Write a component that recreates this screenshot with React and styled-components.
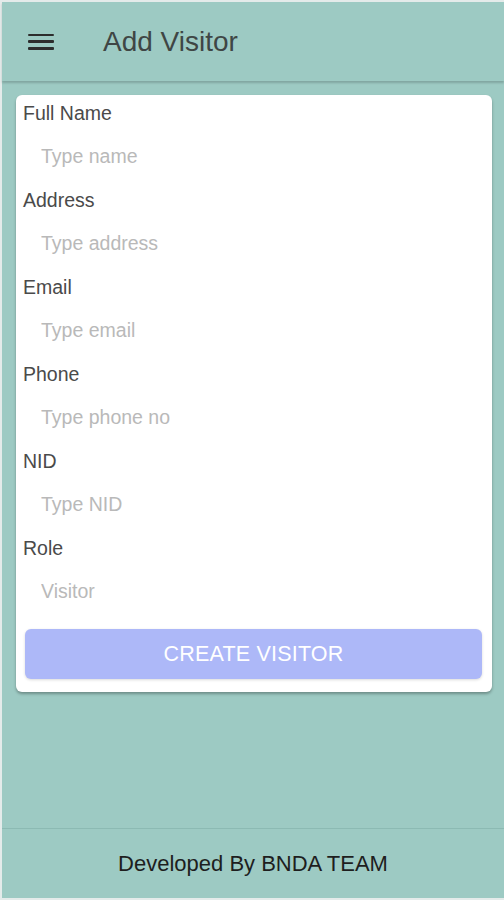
import React from "react";
import styled, { createGlobalStyle } from "styled-components";

const Global = createGlobalStyle`
  html, body { margin: 0; padding: 0; background: #e4ebea; }
  * { box-sizing: border-box; }
  body { font-family: "Liberation Sans", Arial, sans-serif; }
`;

const Page = styled.div`
  width: 504px;
  height: 900px;
  margin: 0;
  padding: 2px 0 2px 2px;
  display: flex;
  flex-direction: column;
`;

const Screen = styled.div`
  flex: 1;
  background: #9dcac3;
  display: flex;
  flex-direction: column;
`;

const Header = styled.header`
  height: 79px;
  display: flex;
  align-items: center;
  padding-left: 26px;
  gap: 49px;
  box-shadow: 0 2px 2px rgba(0, 0, 0, 0.18);
  position: relative;
  z-index: 1;
`;

const Burger = styled.button`
  width: 26px;
  height: 16px;
  padding: 0;
  border: none;
  background: none;
  display: flex;
  flex-direction: column;
  justify-content: space-between;
  span {
    display: block;
    height: 2.5px;
    background: #2d2d2d;
    border-radius: 1px;
  }
`;

const Title = styled.h1`
  margin: 0;
  font-size: 28px;
  font-weight: 400;
  color: #3f4645;
`;

const Main = styled.main`
  flex: 1;
  padding: 14px 12px 0 14px;
`;

const Card = styled.form`
  background: #fff;
  border-radius: 6px;
  padding: 7px 10px 13px 7px;
  box-shadow: 0 2px 3px rgba(0, 0, 0, 0.3);
  display: flex;
  flex-direction: column;
`;

const Label = styled.label`
  font-size: 19.5px;
  line-height: 22px;
  color: #4a4a4a;
`;

const Input = styled.input`
  height: 65px;
  border: none;
  outline: none;
  padding: 0 0 0 18px;
  font-family: inherit;
  font-size: 19.5px;
  color: #333;
  background: transparent;
  &::placeholder { color: #b9b9b9; }
`;

const Button = styled.button`
  margin: 5px 0 0 2px;
  height: 50px;
  border: none;
  border-radius: 6px;
  background: #adb8f8;
  color: #fff;
  font-family: inherit;
  font-size: 21.5px;
  letter-spacing: 0.2px;
  text-transform: uppercase;
  box-shadow: 0 1px 3px rgba(0, 0, 0, 0.15);
`;

const Footer = styled.footer`
  height: 70px;
  border-top: 1.5px solid #8cbab3;
  display: flex;
  align-items: center;
  justify-content: center;
  font-size: 22px;
  color: #1e1e1e;
`;

const fields = [
  ["Full Name", "Type name"],
  ["Address", "Type address"],
  ["Email", "Type email"],
  ["Phone", "Type phone no"],
  ["NID", "Type NID"],
  ["Role", "Visitor"],
];

export default function App() {
  return (
    <>
      <Global />
      <Page>
        <Screen>
          <Header>
            <Burger aria-label="menu">
              <span />
              <span />
              <span />
            </Burger>
            <Title>Add Visitor</Title>
          </Header>
          <Main>
            <Card onSubmit={(e) => e.preventDefault()}>
              {fields.map(([label, ph]) => (
                <React.Fragment key={label}>
                  <Label>{label}</Label>
                  <Input placeholder={ph} />
                </React.Fragment>
              ))}
              <Button type="submit">Create Visitor</Button>
            </Card>
          </Main>
          <Footer>Developed By BNDA TEAM</Footer>
        </Screen>
      </Page>
    </>
  );
}
